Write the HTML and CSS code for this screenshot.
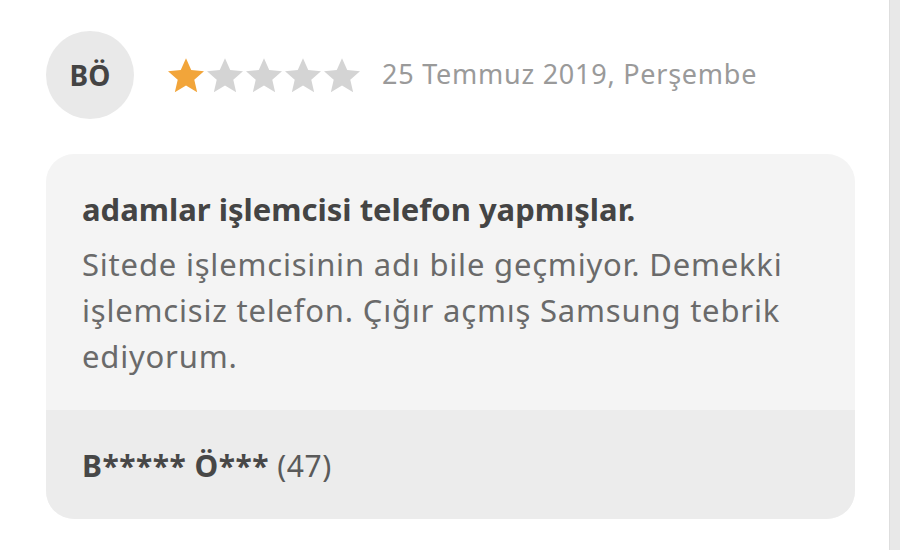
FILE: index.html
```html
<!DOCTYPE html>
<html lang="tr">
<head>
    <meta charset="UTF-8">
    <title>Yorum</title>
    <link rel="stylesheet" href="styles.css">
</head>
<body>
    <div class="page">
        <div class="content">
            <div class="review-head">
                <div class="avatar">BÖ</div>
                <div class="stars">
                    <svg class="star on" viewBox="2 2 20 19.2"><path d="M12 2l2.9 6.6 7.1.6-5.4 4.7 1.6 7-6.2-3.7-6.2 3.7 1.6-7L2 9.2l7.1-.6z"/></svg>
                    <svg class="star" viewBox="2 2 20 19.2"><path d="M12 2l2.9 6.6 7.1.6-5.4 4.7 1.6 7-6.2-3.7-6.2 3.7 1.6-7L2 9.2l7.1-.6z"/></svg>
                    <svg class="star" viewBox="2 2 20 19.2"><path d="M12 2l2.9 6.6 7.1.6-5.4 4.7 1.6 7-6.2-3.7-6.2 3.7 1.6-7L2 9.2l7.1-.6z"/></svg>
                    <svg class="star" viewBox="2 2 20 19.2"><path d="M12 2l2.9 6.6 7.1.6-5.4 4.7 1.6 7-6.2-3.7-6.2 3.7 1.6-7L2 9.2l7.1-.6z"/></svg>
                    <svg class="star" viewBox="2 2 20 19.2"><path d="M12 2l2.9 6.6 7.1.6-5.4 4.7 1.6 7-6.2-3.7-6.2 3.7 1.6-7L2 9.2l7.1-.6z"/></svg>
                </div>
                <div class="date">25 Temmuz 2019, Perşembe</div>
            </div>
            <div class="review-card">
                <div class="review-body">
                    <h2 class="review-title">adamlar işlemcisi telefon yapmışlar.</h2>
                    <p class="review-text">Sitede işlemcisinin adı bile geçmiyor. Demekki işlemcisiz telefon. Çığır açmış Samsung tebrik ediyorum.</p>
                </div>
                <div class="review-foot"><b>B***** Ö***</b> (47)</div>
            </div>
        </div>
        <div class="scrollbar"></div>
    </div>
</body>
</html>
```

FILE: styles.css
```css
body {
    margin: 0;
    padding: 0;
    background-color: #ffffff;
    font-family: "Noto Sans", sans-serif;
}
.page {
    display: flex;
    height: 550px;
}
.content {
    flex: 1;
    padding: 31px 0 0 46px;
}
.scrollbar {
    width: 10px;
    background-color: #e8e8e8;
    border-left: 1px solid #dedede;
}
.review-head {
    display: flex;
    align-items: center;
}
.avatar {
    width: 88px;
    height: 88px;
    border-radius: 50%;
    background-color: #e9e9e9;
    color: #444444;
    font-weight: bold;
    font-size: 28px;
    display: flex;
    align-items: center;
    justify-content: center;
}
.stars {
    display: flex;
    gap: 3px;
    margin-left: 34px;
}
.star {
    width: 36px;
    height: 35px;
    fill: #d4d4d4;
}
.star.on {
    fill: #f2a53a;
}
.date {
    margin-left: 22px;
    margin-bottom: 3px;
    font-size: 27px;
    letter-spacing: 0.75px;
    color: #9a9a9a;
}
.review-card {
    width: 809px;
    margin-top: 35px;
    border-radius: 28px;
    overflow: hidden;
    background-color: #f4f4f4;
}
.review-body {
    padding: 35px 36px 31px 36px;
}
.review-title {
    margin: 0;
    font-size: 31px;
    color: #444444;
    line-height: 40px;
}
.review-text {
    margin: 12px 0 0 0;
    font-size: 31px;
    letter-spacing: 0.8px;
    line-height: 46px;
    color: #6a6a6a;
}
.review-foot {
    background-color: #ececec;
    height: 109px;
    box-sizing: border-box;
    padding: 36px 36px 0 36px;
    font-size: 30px;
    letter-spacing: 0.5px;
    line-height: 40px;
    color: #5a5a5a;
}
.review-foot b {
    color: #474747;
}
```
